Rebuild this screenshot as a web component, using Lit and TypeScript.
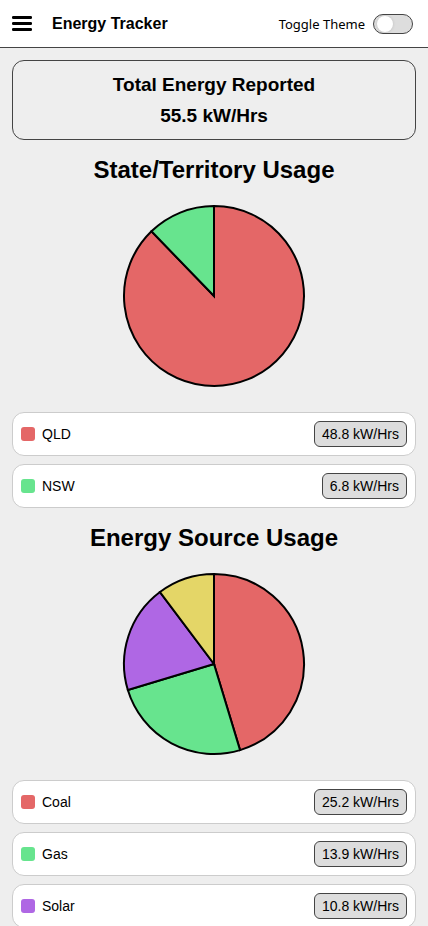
import { LitElement, html, svg, css } from "lit";
import { customElement, property, state } from "lit/decorators.js";
import { styleMap } from "lit/directives/style-map.js";

interface Reading {
  name: string;
  value: number;
  color: string;
}

const RED = "#e46767";
const GREEN = "#67e48e";
const PURPLE = "#af67e4";
const YELLOW = "#e4d667";

@customElement("energy-pie")
export class EnergyPie extends LitElement {
  @property({ attribute: false }) readings: Reading[] = [];
  @property() label = "";

  static styles = css`
    :host {
      display: block;
    }
    .pie {
      display: block;
      width: 200px;
      height: 200px;
      margin: 0 auto;
    }
    .slice {
      stroke: #000;
      stroke-width: 2;
    }
  `;

  private slices() {
    const total = this.readings.reduce((sum, r) => sum + r.value, 0);
    const point = (share: number) => {
      const angle = share * 2 * Math.PI;
      return `${100 + 90 * Math.sin(angle)} ${100 - 90 * Math.cos(angle)}`;
    };
    let start = 0;
    return this.readings.map((r) => {
      const share = r.value / total;
      const end = start + share;
      const d = `M100 100L${point(start)}A90 90 0 ${share > 0.5 ? 1 : 0} 1 ${point(end)}Z`;
      start = end;
      return svg`<path class="slice" d=${d} fill=${r.color}></path>`;
    });
  }

  render() {
    return html`<svg class="pie" viewBox="0 0 200 200" role="img" aria-label=${this.label}>
      ${this.slices()}
    </svg>`;
  }
}

@customElement("usage-section")
export class UsageSection extends LitElement {
  @property() heading = "";
  @property({ attribute: false }) readings: Reading[] = [];

  static styles = css`
    :host {
      display: block;
    }
    .heading {
      margin: 16px 0 12px;
      font-size: 24px;
      line-height: 28px;
      text-align: center;
    }
    .list {
      display: flex;
      flex-direction: column;
      gap: 8px;
      margin: 16px 0 0;
      padding: 0;
      list-style: none;
    }
    .row {
      display: flex;
      align-items: center;
      gap: 7px;
      padding: 8px;
      border: 1px solid var(--soft-border);
      border-radius: 12px;
      background: var(--surface);
      font-size: 14px;
      line-height: 16px;
    }
    .swatch {
      width: 14px;
      height: 14px;
      border-radius: 3px;
    }
    .amount {
      margin-left: auto;
      padding: 4px 7px;
      border: 1px solid var(--border);
      border-radius: 6px;
      background: var(--muted);
    }
  `;

  render() {
    return html`
      <h2 class="heading">${this.heading}</h2>
      <energy-pie .readings=${this.readings} .label=${this.heading}></energy-pie>
      <ul class="list">
        ${this.readings.map(
          (r) => html`<li class="row">
            <span class="swatch" style=${styleMap({ background: r.color })}></span>
            <span>${r.name}</span>
            <span class="amount">${r.value.toFixed(1)} kW/Hrs</span>
          </li>`
        )}
      </ul>
    `;
  }
}

@customElement("app-root")
export class AppRoot extends LitElement {
  @state() private dark = false;

  private states: Reading[] = [
    { name: "QLD", value: 48.8, color: RED },
    { name: "NSW", value: 6.8, color: GREEN },
  ];

  private sources: Reading[] = [
    { name: "Coal", value: 25.2, color: RED },
    { name: "Gas", value: 13.9, color: GREEN },
    { name: "Solar", value: 10.8, color: PURPLE },
    { name: "Wind", value: 5.7, color: YELLOW },
  ];

  static styles = css`
    :host {
      display: block;
    }
    .page {
      --page: #eeeeee;
      --surface: #ffffff;
      --muted: #dddddd;
      --border: #444444;
      --soft-border: #cccccc;
      --text: #000000;
      min-height: 100vh;
      background: var(--page);
      color: var(--text);
      font-family: "Liberation Sans", Arial, sans-serif;
    }
    .page.dark {
      --page: #222222;
      --surface: #111111;
      --muted: #333333;
      --border: #bbbbbb;
      --soft-border: #555555;
      --text: #ffffff;
    }
    .bar {
      display: flex;
      align-items: center;
      gap: 20px;
      box-sizing: border-box;
      height: 48px;
      padding: 0 15px 0 12px;
      border-bottom: 1px solid var(--border);
      background: var(--surface);
    }
    .menu {
      display: block;
      padding: 0;
      border: 0;
      background: none;
      color: inherit;
      cursor: pointer;
    }
    .menu-icon {
      display: block;
      width: 20px;
      height: 15px;
      fill: currentColor;
    }
    .title {
      margin: 0;
      font-size: 16px;
      line-height: 20px;
    }
    .theme {
      display: flex;
      align-items: center;
      gap: 8px;
      margin-left: auto;
      font-family: "Noto Sans", sans-serif;
      font-size: 13px;
      line-height: 20px;
    }
    .switch {
      display: flex;
      align-items: center;
      box-sizing: border-box;
      width: 40px;
      height: 20px;
      margin: 0;
      padding: 0 3px;
      appearance: none;
      border: 1px solid var(--border);
      border-radius: 10px;
      background: var(--muted);
      cursor: pointer;
    }
    .switch::before {
      content: "";
      width: 16px;
      height: 16px;
      border-radius: 50%;
      background: #fff;
      box-shadow: 0 0 3px rgba(0, 0, 0, 0.15);
    }
    .switch:checked {
      justify-content: flex-end;
    }
    .content {
      padding: 12px;
    }
    .total {
      padding: 8px;
      border: 1px solid var(--border);
      border-radius: 12px;
      font-size: 19px;
      font-weight: bold;
      line-height: 31px;
      text-align: center;
    }
    .line {
      margin: 0;
    }
  `;

  private toggle(e: Event) {
    this.dark = (e.target as HTMLInputElement).checked;
  }

  render() {
    return html`
      <div class="page ${this.dark ? "dark" : ""}">
        <header class="bar">
          <button class="menu" type="button" aria-label="Menu">
            <svg class="menu-icon" viewBox="0 0 20 15" aria-hidden="true">
              <rect width="20" height="3" rx="1.2"></rect>
              <rect y="6" width="20" height="3" rx="1.2"></rect>
              <rect y="12" width="20" height="3" rx="1.2"></rect>
            </svg>
          </button>
          <h1 class="title">Energy Tracker</h1>
          <label class="theme">
            Toggle Theme
            <input class="switch" type="checkbox" role="switch" .checked=${this.dark} @change=${this.toggle} />
          </label>
        </header>
        <main class="content">
          <section class="total">
            <p class="line">Total Energy Reported</p>
            <p class="line">55.5 kW/Hrs</p>
          </section>
          <usage-section .heading=${"State/Territory Usage"} .readings=${this.states}></usage-section>
          <usage-section .heading=${"Energy Source Usage"} .readings=${this.sources}></usage-section>
        </main>
      </div>
    `;
  }
}
